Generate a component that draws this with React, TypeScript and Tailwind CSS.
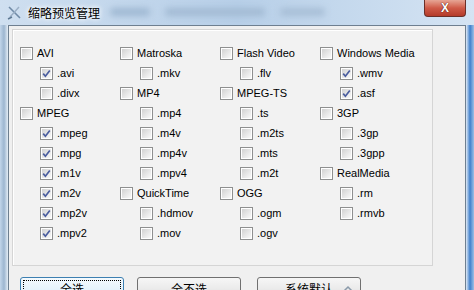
import React from 'react';

type Item = { label: string; checked?: boolean; sub?: boolean };

const columns: Item[][] = [
  [
    { label: 'AVI' },
    { label: '.avi', sub: true, checked: true },
    { label: '.divx', sub: true },
    { label: 'MPEG' },
    { label: '.mpeg', sub: true, checked: true },
    { label: '.mpg', sub: true, checked: true },
    { label: '.m1v', sub: true, checked: true },
    { label: '.m2v', sub: true, checked: true },
    { label: '.mp2v', sub: true, checked: true },
    { label: '.mpv2', sub: true, checked: true },
  ],
  [
    { label: 'Matroska' },
    { label: '.mkv', sub: true },
    { label: 'MP4' },
    { label: '.mp4', sub: true },
    { label: '.m4v', sub: true },
    { label: '.mp4v', sub: true },
    { label: '.mpv4', sub: true },
    { label: 'QuickTime' },
    { label: '.hdmov', sub: true },
    { label: '.mov', sub: true },
  ],
  [
    { label: 'Flash Video' },
    { label: '.flv', sub: true },
    { label: 'MPEG-TS' },
    { label: '.ts', sub: true },
    { label: '.m2ts', sub: true },
    { label: '.mts', sub: true },
    { label: '.m2t', sub: true },
    { label: 'OGG' },
    { label: '.ogm', sub: true },
    { label: '.ogv', sub: true },
  ],
  [
    { label: 'Windows Media' },
    { label: '.wmv', sub: true, checked: true },
    { label: '.asf', sub: true, checked: true },
    { label: '3GP' },
    { label: '.3gp', sub: true },
    { label: '.3gpp', sub: true },
    { label: 'RealMedia' },
    { label: '.rm', sub: true },
    { label: '.rmvb', sub: true },
  ],
];

function CheckBox({ checked }: { checked?: boolean }) {
  return (
    <div className="relative w-[13px] h-[13px] border border-[#8e8f8f] bg-white p-[1px] shrink-0">
      <div className="w-full h-full bg-gradient-to-br from-[#d2d2d2] to-[#f9f9f9]" />
      {checked && (
        <svg className="absolute left-0 top-0" width="11" height="11" viewBox="0 0 11 11">
          <path d="M2.2 5.6 L4.4 8.2 L8.8 2.4" fill="none" stroke="#4a5d9e" strokeWidth="1.7" />
        </svg>
      )}
    </div>
  );
}

function Row({ item }: { item: Item }) {
  return (
    <div className={`flex items-center h-[20px] ${item.sub ? 'pl-[20px]' : ''}`}>
      <CheckBox checked={item.checked} />
      <span className="ml-[4px] text-[11px] text-black leading-none">{item.label}</span>
    </div>
  );
}

function Button({ label, focused, chevron }: { label: string; focused?: boolean; chevron?: boolean }) {
  return (
    <div
      className={`relative w-[104px] h-[23px] rounded-[3px] border flex items-center justify-center shrink-0 ${
        focused
          ? 'border-[#3c7fb1] bg-gradient-to-b from-[#f4fafe] to-[#d9ecf8]'
          : 'border-[#707070] bg-gradient-to-b from-[#f6f6f6] via-[#ebebeb] to-[#d7d7d7]'
      }`}
    >
      {focused && <div className="absolute inset-[2px] border border-dotted border-black" />}
      <span className="text-[12px] text-black" style={{ fontFamily: '"Noto Sans CJK SC", sans-serif' }}>
        {label}
      </span>
      {chevron && (
        <svg className="absolute right-[7px] top-[7px]" width="10" height="7" viewBox="0 0 10 7">
          <path d="M1 6 L5 2 L9 6" fill="none" stroke="#8a9aaa" strokeWidth="1.5" />
        </svg>
      )}
    </div>
  );
}

export default function App() {
  return (
    <div
      className="w-[474px] h-[290px] overflow-hidden flex flex-col bg-[#c9dbee]"
      style={{ fontFamily: '"Liberation Sans", Arial, sans-serif' }}
    >
      {/* title bar */}
      <div className="relative h-[25px] shrink-0 flex items-center bg-gradient-to-r from-[#cfdff0] via-[#b7cfe8] to-[#d5e4f3]">
        <div className="absolute left-[110px] top-[8px] w-[40px] h-[8px] rounded bg-[#9fb8d2] blur-[3px]" />
        <div className="absolute left-[165px] top-[8px] w-[100px] h-[8px] rounded bg-[#a2bad3] blur-[3px]" />
        <div className="absolute left-[280px] top-[8px] w-[45px] h-[8px] rounded bg-[#a7bed6] blur-[3px]" />
        <svg className="ml-[7px] shrink-0" width="15" height="15" viewBox="0 0 15 15">
          <path d="M2 2 L13 13" stroke="#6f8aa6" strokeWidth="1.6" />
          <path d="M12 2 L3 12" stroke="#9aaec4" strokeWidth="1.4" />
          <path d="M1 14 L5 12" stroke="#5d7893" strokeWidth="1.4" />
        </svg>
        <span
          className="relative ml-[6px] text-[12px] text-black"
          style={{ fontFamily: '"Noto Sans CJK SC", sans-serif', textShadow: '0 0 6px #fff, 0 0 4px #fff' }}
        >
          缩略预览管理
        </span>
        <div className="absolute left-[424px] top-0 w-[42px] h-[17px] rounded-b-[4px] border border-t-0 border-[#6b2f28] bg-gradient-to-b from-[#e6a595] via-[#cf5a48] to-[#b33b2a] flex items-center justify-center">
          <span
            className="text-[12px] font-bold text-white leading-none"
            style={{ textShadow: '0 0 1px #5a1a10, 0 0 1px #5a1a10' }}
          >
            X
          </span>
        </div>
      </div>

      {/* body */}
      <div className="flex flex-1">
        <div className="w-[8px] shrink-0 bg-gradient-to-r from-[#c2d5ea] via-[#9db6d0] to-[#e4edf6]" />
        <div className="flex-1 border border-[#6e7f90] border-b-0 bg-[#f0f0f0] flex flex-col">
          <div className="ml-[3px] mt-[3px] w-[421px] h-[237px] border border-[#d5d5d5] bg-[#f2f2f2] shadow-[inset_1px_1px_0_#ffffff] flex pt-[13px] pl-[7px]">
            {columns.map((col, i) => (
              <div key={i} className="w-[100px] flex flex-col">
                {col.map((item) => (
                  <Row key={item.label} item={item} />
                ))}
              </div>
            ))}
          </div>
          <div className="flex mt-[11px] pl-[11px]">
            <Button label="全选" focused />
            <div className="ml-[13px]">
              <Button label="全不选" />
            </div>
            <div className="ml-[16px]">
              <Button label="系统默认" chevron />
            </div>
          </div>
        </div>
        <div className="w-[8px] shrink-0 bg-gradient-to-r from-[#e2ecf6] via-[#3d7fcb] to-[#9cc0e6]" />
      </div>
    </div>
  );
}
